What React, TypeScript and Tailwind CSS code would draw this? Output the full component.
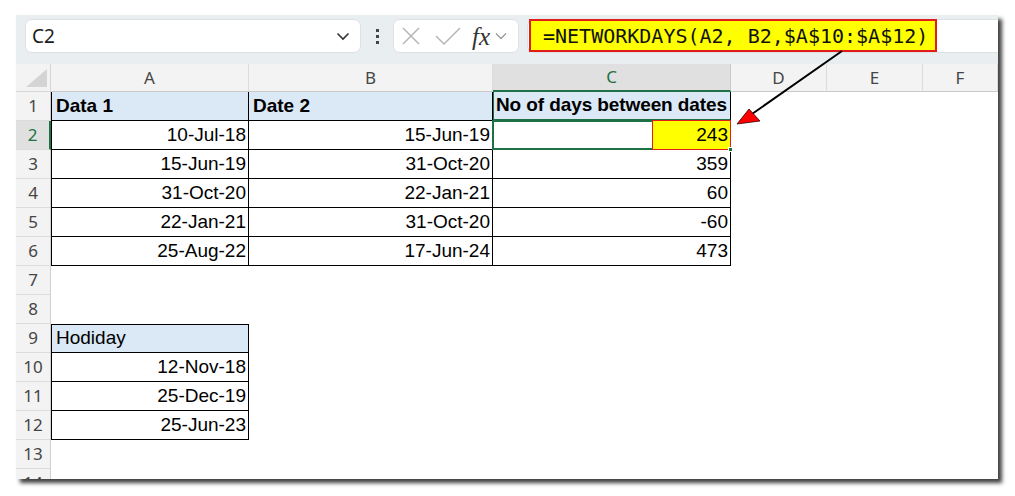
import React from 'react';

type Row = { n: number; a?: string; b?: string; c?: string; kind: 'head' | 'data' | 'blank' | 'hol-head' | 'hol' };

const rows: Row[] = [
  { n: 1, a: 'Data 1', b: 'Date 2', c: 'No of days between dates', kind: 'head' },
  { n: 2, a: '10-Jul-18', b: '15-Jun-19', c: '243', kind: 'data' },
  { n: 3, a: '15-Jun-19', b: '31-Oct-20', c: '359', kind: 'data' },
  { n: 4, a: '31-Oct-20', b: '22-Jan-21', c: '60', kind: 'data' },
  { n: 5, a: '22-Jan-21', b: '31-Oct-20', c: '-60', kind: 'data' },
  { n: 6, a: '25-Aug-22', b: '17-Jun-24', c: '473', kind: 'data' },
  { n: 7, kind: 'blank' },
  { n: 8, kind: 'blank' },
  { n: 9, a: 'Hodiday', kind: 'hol-head' },
  { n: 10, a: '12-Nov-18', kind: 'hol' },
  { n: 11, a: '25-Dec-19', kind: 'hol' },
  { n: 12, a: '25-Jun-23', kind: 'hol' },
  { n: 13, kind: 'blank' },
  { n: 14, kind: 'blank' },
];

const cellFont = { fontFamily: '"Liberation Sans", Arial, sans-serif' };
const uiFont = { fontFamily: '"Noto Sans", "Open Sans", sans-serif' };

const NameBox = () => (
  <div className="w-[336px] h-[34px] bg-white rounded-[7px] border border-[#dde1e4] flex items-center justify-between pl-[6px] pr-[10px]">
    <span className="text-[19px] text-[#1b1b1b]" style={uiFont}>C2</span>
    <svg width="14" height="9" viewBox="0 0 14 9">
      <path d="M1.5 1.5 L7 7 L12.5 1.5" fill="none" stroke="#333" strokeWidth="1.6" />
    </svg>
  </div>
);

const FxBox = () => (
  <div className="w-[126px] h-[34px] bg-white rounded-[7px] border border-[#dde1e4] flex items-center pl-[7px]">
    <svg width="20" height="20" viewBox="0 0 20 20">
      <path d="M2 2 L18 18 M18 2 L2 18" stroke="#b5b5b5" strokeWidth="1.5" fill="none" />
    </svg>
    <svg width="26" height="20" viewBox="0 0 26 20" className="ml-[14px]">
      <path d="M1 10 L9 18 L25 2" stroke="#b5b5b5" strokeWidth="1.5" fill="none" />
    </svg>
    <span className="ml-[11px] text-[25px] italic text-[#333] leading-none" style={{ fontFamily: '"Liberation Serif", "Times New Roman", serif' }}>
      fx
    </span>
    <svg width="12" height="8" viewBox="0 0 12 8" className="ml-[5px]">
      <path d="M1 1.5 L6 6.5 L11 1.5" fill="none" stroke="#9a9a9a" strokeWidth="1.3" />
    </svg>
  </div>
);

const FormulaBar = () => (
  <div className="h-[49px] shrink-0 bg-[#e9eef1] flex items-start pt-[4px] pl-[9px]">
    <NameBox />
    <div className="w-[32px] h-[34px] flex flex-col items-center justify-center gap-[3px]">
      <div className="w-[3px] h-[3px] bg-[#444]" />
      <div className="w-[3px] h-[3px] bg-[#444]" />
      <div className="w-[3px] h-[3px] bg-[#444]" />
    </div>
    <FxBox />
    <div className="ml-[8px] flex-1 h-[34px] bg-white rounded-l-[7px] border border-r-0 border-[#dde1e4] pl-[1px]">
      <div className="w-[408px] h-[33px] -mt-[1px] bg-[#ffff00] border-2 border-[#e31b1b] flex items-center pl-[12px]">
        <span className="text-[20px] text-[#111] whitespace-pre" style={{ fontFamily: '"DejaVu Sans Mono", monospace' }}>
          =NETWORKDAYS(A2, B2,$A$10:$A$12)
        </span>
      </div>
    </div>
  </div>
);

const ColumnHeader = () => {
  const cols = [
    { l: 'A', w: 'w-[198px]', sel: false },
    { l: 'B', w: 'w-[244px]', sel: false },
    { l: 'C', w: 'w-[238px]', sel: true },
    { l: 'D', w: 'w-[96px]', sel: false },
    { l: 'E', w: 'w-[96px]', sel: false },
    { l: 'F', w: 'flex-1', sel: false },
  ];
  return (
    <div className="h-[28px] shrink-0 flex bg-[#f3f3f3]" style={uiFont}>
      <div className="w-[35px] h-full border-r border-b border-[#d6d6d6] flex items-end justify-end pr-[3px] pb-[4px]">
        <svg width="21" height="18" viewBox="0 0 21 18">
          <path d="M21 0 L21 18 L0 18 Z" fill="#d4d4d4" />
        </svg>
      </div>
      {cols.map((c) => (
        <div
          key={c.l}
          className={`${c.w} h-full flex items-center justify-center text-[17px] border-r ${
            c.sel ? 'bg-[#e0e0e0] text-[#1e7145] border-b-2 border-b-[#1e7145] border-r-[#c9c9c9]' : 'text-[#454545] border-b border-[#c9c9c9] border-r-[#dcdcdc]'
          }`}
        >
          {c.l}
        </div>
      ))}
    </div>
  );
};

const GridRow = ({ r }: { r: Row }) => {
  const boxed = r.kind === 'head' || r.kind === 'data';
  const hol = r.kind === 'hol' || r.kind === 'hol-head';
  const sel = r.n === 2;
  const aBorder = boxed || hol ? 'border-l border-r border-b border-black' : '';
  const bcBorder = boxed ? 'border-r border-b border-black' : '';
  const fill = r.kind === 'head' || r.kind === 'hol-head' ? 'bg-[#dbe8f5]' : 'bg-white';
  const align = r.kind === 'head' || r.kind === 'hol-head' ? 'justify-start pl-[4px]' : 'justify-end pr-[2px]';
  const weight = r.kind === 'head' ? 'font-bold' : '';
  return (
    <div className="h-[29px] flex shrink-0 text-[19px] text-black whitespace-nowrap" style={cellFont}>
      <div
        className={`w-[35px] h-full flex items-center justify-center text-[17px] border-b border-[#dcdcdc] ${
          sel ? 'bg-[#e0e0e0] text-[#1e7145] border-r-2 border-r-[#1e7145]' : 'bg-[#f3f3f3] text-[#454545] border-r border-r-[#d0d0d0]'
        }`}
        style={uiFont}
      >
        {r.n}
      </div>
      <div className={`w-[198px] h-full flex items-center ${align} ${weight} ${boxed || hol ? fill : ''} ${aBorder} ${r.kind === 'hol-head' ? 'border-t' : ''}`}>
        {r.a}
      </div>
      <div className={`w-[244px] h-full flex items-center ${align} ${weight} ${boxed ? fill : ''} ${bcBorder}`}>{r.b}</div>
      <div
        className={`w-[238px] h-full flex items-center ${
          r.kind === 'head' ? 'justify-start pl-[2px] border-l border-l-[#1e7145] border-b-2 border-b-[#1e7145] tracking-[-0.1px]' : align
        } ${weight} ${boxed ? fill : ''} ${bcBorder} ${sel ? 'relative' : ''}`}
      >
        {sel ? (
          <>
            <div className="absolute -left-[1px] -top-[1px] w-[239px] h-[30px] border-2 border-[#1e7145]" />
            <div className="absolute right-[-1px] -top-[1px] w-[79px] h-[30px] bg-[#ffff00] border-[1.5px] border-[#e31b1b] flex items-center justify-end pr-[2px]">
              {r.c}
            </div>
            <div className="absolute -right-[3px] -bottom-[3px] w-[5px] h-[5px] bg-[#1e7145] border border-white" />
          </>
        ) : (
          r.c
        )}
      </div>
      <div className="w-[96px] h-full" />
      <div className="w-[96px] h-full" />
      <div className="flex-1 h-full" />
    </div>
  );
};

export default function App() {
  return (
    <div className="w-[1015px] h-[496px] bg-white pt-[15px] pl-[16px]">
      <div className="relative w-[982px] h-[464px] bg-white overflow-hidden shadow-[4px_4px_4px_rgba(0,0,0,0.75)] flex flex-col">
        <FormulaBar />
        <ColumnHeader />
        {rows.map((r) => (
          <GridRow key={r.n} r={r} />
        ))}
        <svg className="absolute inset-0 pointer-events-none" width="982" height="464" viewBox="0 0 982 464">
          <line x1="826" y1="36" x2="736" y2="99" stroke="#000" strokeWidth="2" />
          <path d="M721 109 L733 94 L744 106 Z" fill="#ff0000" stroke="#300" strokeWidth="0.8" />
        </svg>
      </div>
    </div>
  );
}
